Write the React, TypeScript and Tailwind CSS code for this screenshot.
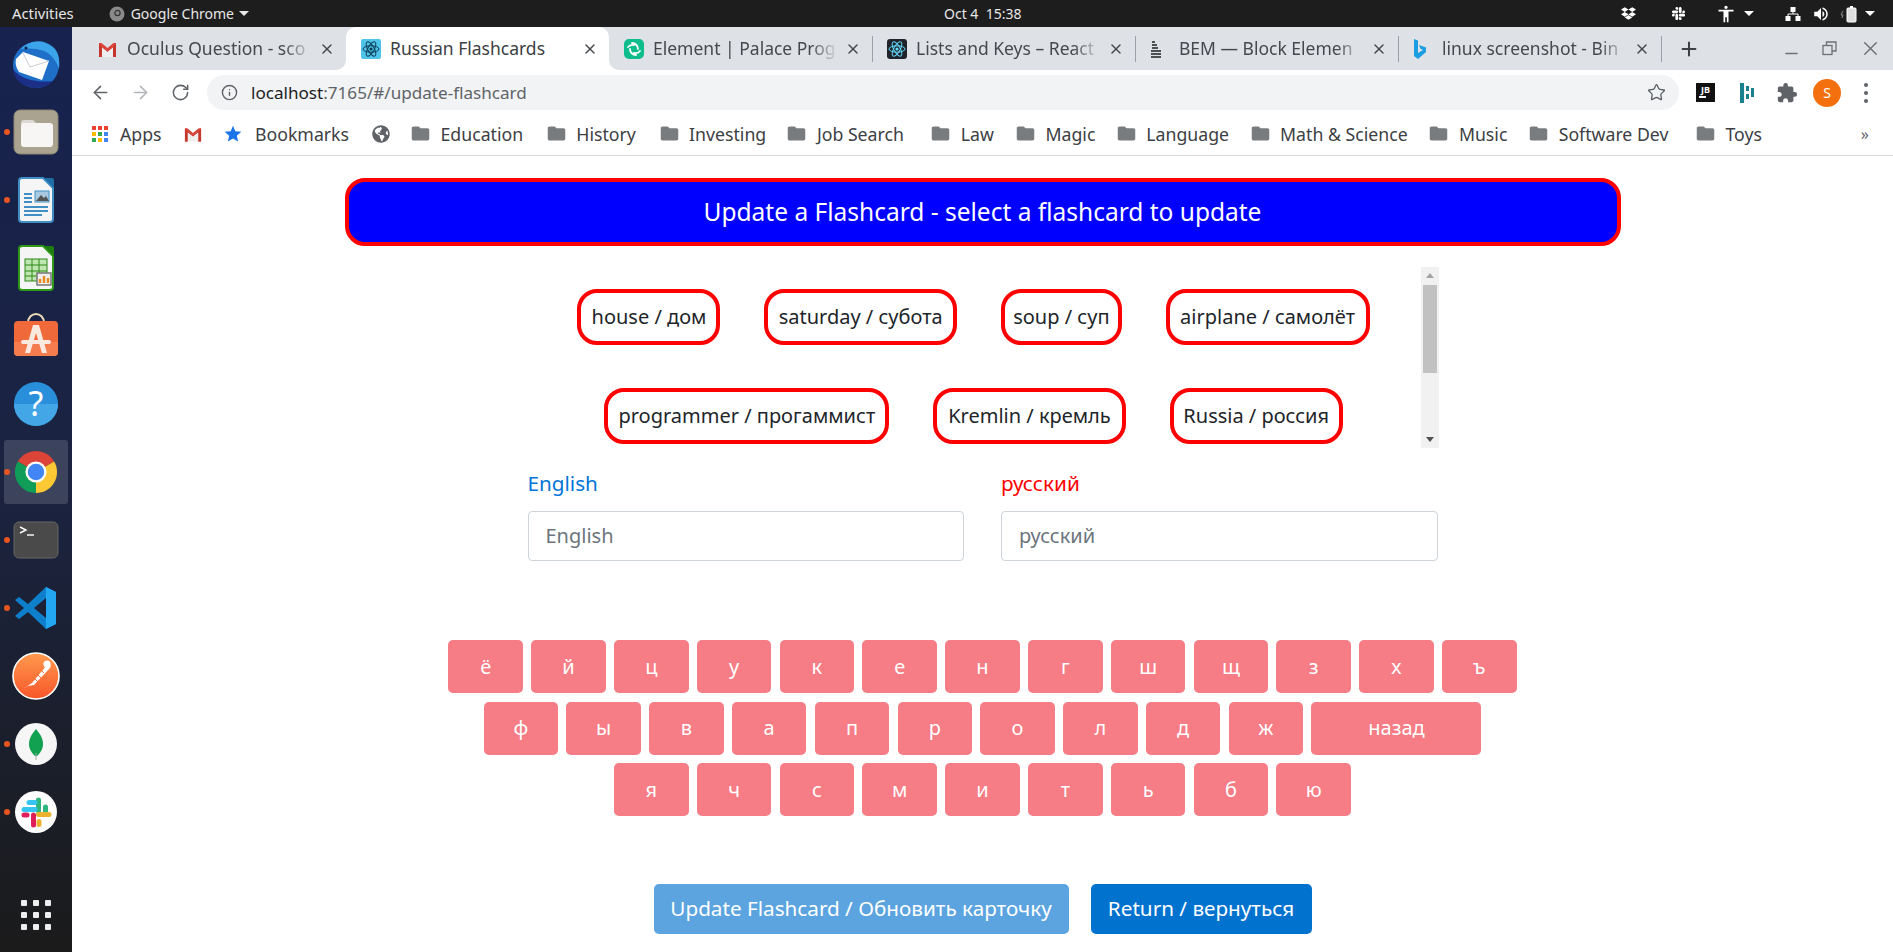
import { ArrowLeft, ArrowRight, Info, Minus, Plus, RotateCw, Star, X } from 'lucide-react'
import { FaDropbox, FaGlobeAmericas, FaSlack } from 'react-icons/fa'
import { MdAccessibility, MdExtension, MdFolder, MdStar, MdVolumeUp } from 'react-icons/md'

const font = "font-['Noto_Sans','Liberation_Sans',sans-serif]"

const row1 = ['ё', 'й', 'ц', 'у', 'к', 'е', 'н', 'г', 'ш', 'щ', 'з', 'х', 'ъ']
const row2 = ['ф', 'ы', 'в', 'а', 'п', 'р', 'о', 'л', 'д', 'ж']
const row3 = ['я', 'ч', 'с', 'м', 'и', 'т', 'ь', 'б', 'ю']

const chipsTop = [
  { label: 'house / дом', w: 'w-[143px]' },
  { label: 'saturday / субота', w: 'w-[193px]' },
  { label: 'soup / суп', w: 'w-[121px]' },
  { label: 'airplane / самолёт', w: 'w-[204px]' },
]
const chipsBottom = [
  { label: 'programmer / прогаммист', w: 'w-[285px]' },
  { label: 'Kremlin / кремль', w: 'w-[193px]' },
  { label: 'Russia / россия', w: 'w-[173px]' },
]

const bookmarks = [
  { label: 'Education', w: 'w-[84px]' },
  { label: 'History', w: 'w-[61px]' },
  { label: 'Investing', w: 'w-[76px]' },
  { label: 'Job Search', w: 'w-[92px]' },
  { label: 'Law', w: 'w-[33px]' },
  { label: 'Magic', w: 'w-[49px]' },
  { label: 'Language', w: 'w-[82px]' },
  { label: 'Math & Science', w: 'w-[127px]' },
  { label: 'Music', w: 'w-[48px]' },
  { label: 'Software Dev', w: 'w-[115px]' },
  { label: 'Toys', w: 'w-[37px]' },
]

function ReactLogo({ color }: { color: string }) {
  return (
    <g fill="none" stroke={color} strokeWidth="1">
      <ellipse cx="10" cy="10" rx="8" ry="3.2" />
      <ellipse cx="10" cy="10" rx="8" ry="3.2" transform="rotate(60 10 10)" />
      <ellipse cx="10" cy="10" rx="8" ry="3.2" transform="rotate(120 10 10)" />
      <circle cx="10" cy="10" r="1.6" fill={color} stroke="none" />
    </g>
  )
}

function GmailIcon() {
  return (
    <svg width="19" height="16" viewBox="0 0 19 16">
      <path d="M1 2h2.5L9.5 7 15.5 2H18v14h-3V6.5L9.5 11 4 6.5V16H1z" fill="#d9453a" />
      <path d="M4 6.5V16H1V2z" fill="#c5372c" />
      <path d="M15 6.5V16h3V2z" fill="#c5372c" />
      <path d="M4 6.8l5.5 4.4L15 6.8V16H4z" fill="#eeeeee" />
    </svg>
  )
}

function Favicon({ kind }: { kind: string }) {
  if (kind === 'gmail') return <GmailIcon />
  if (kind === 'react') {
    return (
      <svg width="20" height="20" viewBox="0 0 20 20">
        <rect width="20" height="20" rx="2" fill="#4fc3e8" />
        <ReactLogo color="#0b3c56" />
      </svg>
    )
  }
  if (kind === 'reactdark') {
    return (
      <svg width="20" height="20" viewBox="0 0 20 20">
        <rect width="20" height="20" rx="3" fill="#20232a" />
        <ReactLogo color="#61dafb" />
      </svg>
    )
  }
  if (kind === 'element') {
    return (
      <svg width="20" height="20" viewBox="0 0 20 20">
        <rect width="20" height="20" rx="5" fill="#0dbd8b" />
        <path d="M8 4a6 6 0 0 1 6 6M12 16a6 6 0 0 1-6-6M4 8a6 6 0 0 1 6-2M16 12a6 6 0 0 1-6 2" fill="none" stroke="#fff" strokeWidth="1.8" strokeLinecap="round" />
      </svg>
    )
  }
  if (kind === 'bem') {
    return (
      <svg width="12" height="18" viewBox="0 0 12 18">
        <path d="M2 2h3M2 5h5M2 8h6M1 11h10M1 14h10M1 17h10" stroke="#222" strokeWidth="1.5" />
      </svg>
    )
  }
  return (
    <svg width="14" height="22" viewBox="0 0 14 22">
      <path d="M1 1l4 1.5v12.5l5-3-2.5-1.2-1.5-3.8L13 9.5v4.5L5 21 1 18z" fill="#1b9de2" />
    </svg>
  )
}

const tabs = [
  { title: 'Oculus Question - sco', icon: 'gmail', active: false, sep: false },
  { title: 'Russian Flashcards', icon: 'react', active: true, sep: false },
  { title: 'Element | Palace Prog', icon: 'element', active: false, sep: true },
  { title: 'Lists and Keys – React', icon: 'reactdark', active: false, sep: true },
  { title: 'BEM — Block Elemen', icon: 'bem', active: false, sep: true },
  { title: 'linux screenshot - Bin', icon: 'bing', active: false, sep: true },
]

function Tab({ title, icon, active, sep }: { title: string; icon: string; active: boolean; sep: boolean }) {
  return (
    <div className={`relative flex h-full w-[263px] shrink-0 items-center pl-[15px] pr-[11px] ${active ? 'rounded-t-[10px] bg-white text-[#3c4043]' : 'text-[#45494d]'}`}>
      {active && (
        <>
          <svg className="absolute bottom-0 left-[-10px]" width="10" height="10" viewBox="0 0 10 10">
            <path d="M0 10a10 10 0 0 0 10-10v10z" fill="#fff" />
          </svg>
          <svg className="absolute bottom-0 right-[-10px]" width="10" height="10" viewBox="0 0 10 10">
            <path d="M10 10A10 10 0 0 1 0 0v10z" fill="#fff" />
          </svg>
        </>
      )}
      <div className="flex w-[29px] shrink-0 items-center">
        <Favicon kind={icon} />
      </div>
      <div className={`min-w-0 flex-1 whitespace-nowrap text-[17.5px] ${active ? '' : '[mask-image:linear-gradient(to_right,black_85%,transparent)]'}`}>
        {title}
      </div>
      <X size={16} strokeWidth={2.2} className="ml-[7px] shrink-0 text-[#45494d]" />
      {sep && <div className="absolute right-[-1px] top-[9px] h-[26px] w-px bg-[#9aa0a6]" />}
    </div>
  )
}

function Thunderbird() {
  return (
    <svg width="50" height="50" viewBox="0 0 50 50">
      <circle cx="25" cy="26" r="23" fill="#1f6fc8" />
      <path d="M10 10C18 1 32-1 42 8c6 5 7 13 6 22-3-9-8-15-15-18-8-3-16-3-23-2z" fill="#3ba4ea" />
      <path d="M2 30c1 11 11 19 23 19 8 0 13-3 17-7-14 2-32-1-40-12z" fill="#1b2f86" />
      <path d="M5 20L12 13 38 22 31 41 8 33C5 29 4 24 5 20z" fill="#fff" />
      <path d="M12 14l7 14 19-6" fill="none" stroke="#c9ccd2" strokeWidth="1" />
      <circle cx="15" cy="9" r="1.5" fill="#10224f" />
    </svg>
  )
}

function FilesIcon() {
  return (
    <svg width="46" height="46" viewBox="0 0 46 46">
      <rect x="1" y="1" width="44" height="44" rx="6" fill="#aaa38f" stroke="#8b8573" />
      <path d="M8 14a3 3 0 0 1 3-3h9l4 4H8z" fill="#dcd9d2" />
      <rect x="8" y="14" width="32" height="24" rx="3" fill="#f7f6f4" />
    </svg>
  )
}

function DocIcon({ border, fold, kind }: { border: string; fold: string; kind: 'writer' | 'calc' }) {
  return (
    <svg width="38" height="46" viewBox="0 0 38 46">
      <path d="M2 4a3 3 0 0 1 3-3h21l10 10v31a3 3 0 0 1-3 3H5a3 3 0 0 1-3-3z" fill="#f5f5f5" stroke={border} strokeWidth="2" />
      <path d="M27 1h8a2 2 0 0 1 2 2v8z" fill={fold} />
      {kind === 'writer' ? (
        <>
          <path d="M7 17h8M7 21h8M7 25h8M7 30h24M7 34h24M7 38h18" stroke={border} strokeWidth="2" />
          <rect x="18" y="14" width="14" height="11" fill="#a9cbe2" stroke={border} />
          <path d="M19 24l5-6 3 3 2-2 3 5z" fill="#555" />
        </>
      ) : (
        <>
          <rect x="8" y="14" width="22" height="22" fill="#bfe5b0" stroke="#2c8a17" />
          <path d="M8 20h22M8 26h22M8 31h22M15 14v22M22 14v22" stroke="#2c8a17" />
          <rect x="20" y="28" width="14" height="12" fill="#eee" stroke="#777" strokeWidth="1.5" />
          <path d="M23 38v-4M27 38v-7M31 38v-5" strokeWidth="2.4" stroke="#e98a1a" />
        </>
      )}
    </svg>
  )
}

function SoftwareIcon() {
  return (
    <svg width="46" height="44" viewBox="0 1 46 44" className="mt-[-2px]">
      <path d="M15 11c0-12 16-12 16 0" fill="none" stroke="#ecd9b8" strokeWidth="2" />
      <rect x="1" y="9" width="44" height="35" rx="4" fill="#f0693a" />
      <path d="M1 30h44v10a4 4 0 0 1-4 4H5a4 4 0 0 1-4-4z" fill="#f47c4e" />
      <path d="M20 13h6l8 28h-5l-6-20-6 20h-5z" fill="#fbe9df" />
      <rect x="8" y="28" width="30" height="4" rx="2" fill="#fbe9df" />
    </svg>
  )
}

function HelpIcon() {
  return (
    <svg width="46" height="46" viewBox="0 0 46 46">
      <circle cx="23" cy="23" r="22" fill="#2a8fdb" />
      <path d="M1 23h44a22 22 0 0 1-44 0z" fill="#43a6e6" />
      <text x="23" y="35" textAnchor="middle" fontSize="34" fill="#fff" fontFamily="Noto Sans, sans-serif">?</text>
    </svg>
  )
}

function ChromeIcon() {
  return (
    <svg width="46" height="46" viewBox="0 0 48 48">
      <path d="M24 24L5 13A22 22 0 0 1 43 13z" fill="#db4437" />
      <path d="M24 24L43 13A22 22 0 0 1 24 46z" fill="#fcc934" />
      <path d="M24 24L24 46A22 22 0 0 1 5 13z" fill="#0f9d58" />
      <circle cx="24" cy="24" r="11" fill="#fff" />
      <circle cx="24" cy="24" r="8.6" fill="#4285f4" />
    </svg>
  )
}

function TerminalIcon() {
  return (
    <svg width="46" height="38" viewBox="0 0 46 38">
      <rect x="1" y="1" width="44" height="36" rx="5" fill="#4a4a4a" stroke="#666" />
      <path d="M7 6l6 3-6 3" fill="none" stroke="#fff" strokeWidth="1.4" />
      <path d="M14 14h7" stroke="#fff" strokeWidth="1.4" />
    </svg>
  )
}

function VsCodeIcon() {
  return (
    <svg width="44" height="44" viewBox="0 0 44 44">
      <path d="M32 1l10 5v32l-10 5-18-17-9 7-4-3 9-8-9-8 4-3 9 7zM32 12L20 22l12 10z" fill="#0e7fcb" />
      <path d="M32 1l10 5v32l-10 5z" fill="#22a7f0" />
    </svg>
  )
}

function PostmanIcon() {
  return (
    <svg width="48" height="48" viewBox="0 0 48 48">
      <defs>
        <linearGradient id="pm" x1="0" y1="0" x2="0" y2="1">
          <stop offset="0" stopColor="#ff9a4d" />
          <stop offset="1" stopColor="#f8562a" />
        </linearGradient>
      </defs>
      <circle cx="24" cy="24" r="23" fill="url(#pm)" stroke="#fff" strokeWidth="1.6" />
      <path d="M11 37l9-6 15-18c2-2 5 1 3 3L22 33l-6 1z" fill="#fff" />
      <circle cx="35" cy="12" r="3.6" fill="#fff" />
      <path d="M21 25l5 5M24 21l5 5M28 17l4 4" stroke="#f8702f" strokeWidth="1" />
    </svg>
  )
}

function MongoIcon() {
  return (
    <svg width="42" height="42" viewBox="0 0 42 42">
      <circle cx="21" cy="21" r="21" fill="#f6f6f6" />
      <path d="M21 6c5 6 7 10 7 15 0 6-4 10-6 12h-2c-2-2-6-6-6-12 0-5 2-9 7-15z" fill="#12a150" />
      <path d="M21 30v7" stroke="#aaa" strokeWidth="1" />
    </svg>
  )
}

function SlackIcon() {
  return (
    <svg width="42" height="42" viewBox="0 0 42 42">
      <circle cx="21" cy="21" r="21" fill="#fff" />
      <path d="M23.5 9v11M30.5 16v4" stroke="#2eb67d" strokeWidth="5" strokeLinecap="round" />
      <path d="M9 18.5h11M14 11.5h6" stroke="#36c5f0" strokeWidth="5" strokeLinecap="round" />
      <path d="M18.5 24v10M9 24h3" stroke="#e01e5a" strokeWidth="5" strokeLinecap="round" />
      <path d="M23.5 23.5H34M24 30.5v3" stroke="#ecb22e" strokeWidth="5" strokeLinecap="round" />
    </svg>
  )
}

const dockItems = [
  { icon: <Thunderbird />, dot: false, on: false },
  { icon: <FilesIcon />, dot: true, on: false },
  { icon: <DocIcon border="#3f8fc4" fold="#1d6fa5" kind="writer" />, dot: true, on: false },
  { icon: <DocIcon border="#2c9a17" fold="#1f7d10" kind="calc" />, dot: false, on: false },
  { icon: <SoftwareIcon />, dot: false, on: false },
  { icon: <HelpIcon />, dot: false, on: false },
  { icon: <ChromeIcon />, dot: true, on: true },
  { icon: <TerminalIcon />, dot: true, on: false },
  { icon: <VsCodeIcon />, dot: true, on: false },
  { icon: <PostmanIcon />, dot: false, on: false },
  { icon: <MongoIcon />, dot: true, on: false },
  { icon: <SlackIcon />, dot: true, on: false },
]

function Dock() {
  return (
    <aside className="flex w-[72px] shrink-0 flex-col items-center bg-gradient-to-b from-[#17224f] via-[#1b2340] to-[#1b1b1b] pt-[3px]">
      {dockItems.map((item, i) => (
        <div key={i} className="relative flex h-[68px] w-full items-center justify-center">
          {item.on && <div className="absolute inset-x-[4px] inset-y-[2px] rounded-[3px] bg-white/15" />}
          {item.dot && <div className="absolute left-[4px] top-[31px] h-[6px] w-[6px] rounded-full bg-[#e95420]" />}
          <div className="relative flex items-center justify-center">{item.icon}</div>
        </div>
      ))}
      <div className="mb-[22px] mt-auto grid grid-cols-3 gap-[6px]">
        {Array.from({ length: 9 }, (_, i) => (
          <div key={i} className="h-[6px] w-[6px] rounded-[1px] bg-[#eeeeee]" />
        ))}
      </div>
    </aside>
  )
}

function TopBar() {
  return (
    <header className="relative flex h-[27px] shrink-0 items-center bg-[#1d1d1d] text-[14px] text-[#e8e8e8]">
      <span className="ml-[12px] text-[14.8px]">Activities</span>
      <svg className="ml-[35px]" width="16" height="16" viewBox="0 0 16 16">
        <circle cx="8" cy="8" r="7.5" fill="#8a8a8a" />
        <circle cx="8.5" cy="7" r="2.6" fill="none" stroke="#333" strokeWidth="1.2" />
      </svg>
      <span className="ml-[6px]">Google Chrome</span>
      <span className="ml-[5px] h-0 w-0 border-x-[5px] border-t-[5px] border-x-transparent border-t-[#e8e8e8]" />
      <span className="absolute left-[944px]">Oct 4&nbsp;&nbsp;15:38</span>
      <div className="ml-auto flex items-center text-white">
        <FaDropbox size={15} />
        <FaSlack size={15} className="ml-[35px]" />
        <MdAccessibility size={20} className="ml-[30px]" />
        <span className="ml-[8px] h-0 w-0 border-x-[5px] border-t-[5px] border-x-transparent border-t-white" />
        <svg className="ml-[31px]" width="16" height="16" viewBox="0 0 16 16" fill="#fff">
          <rect x="5.5" y="1" width="5" height="5" />
          <rect x="0.5" y="10" width="5" height="5" />
          <rect x="10.5" y="10" width="5" height="5" />
          <path d="M8 6v2M3 10V8h10v2" fill="none" stroke="#fff" />
        </svg>
        <MdVolumeUp size={18} className="ml-[11px]" />
        <svg className="ml-[10px]" width="18" height="18" viewBox="0 0 18 18">
          <rect x="7" y="3" width="9" height="14" rx="1" fill="#ddd" stroke="#fff" />
          <rect x="10" y="1" width="3" height="2" fill="#fff" />
          <path d="M3 6L1 10h2l-1 3" fill="none" stroke="#888" />
        </svg>
        <span className="ml-[7px] mr-[18px] h-0 w-0 border-x-[5px] border-t-[5px] border-x-transparent border-t-white" />
      </div>
    </header>
  )
}

function TabStrip() {
  return (
    <div className="flex h-[43px] shrink-0 items-center bg-[#dee1e6] pl-[11px]">
      {tabs.map((t) => (
        <Tab key={t.title} {...t} />
      ))}
      <Plus size={22} strokeWidth={2.2} className="ml-[17px] text-[#3c4043]" />
      <div className="ml-auto flex items-center text-[#6d7175]">
        <Minus size={19} className="mt-[9px]" />
        <svg className="ml-[21px]" width="15" height="15" viewBox="0 0 15 15" fill="none" stroke="currentColor" strokeWidth="1.3">
          <rect x="1" y="4.5" width="9" height="9" />
          <path d="M4.5 4.5V1h9.5v9h-4" />
        </svg>
        <X size={23} strokeWidth={1.4} className="ml-[22px] mr-[11px]" />
      </div>
    </div>
  )
}

function Toolbar() {
  return (
    <div className="flex h-[45px] shrink-0 items-center bg-white">
      <ArrowLeft size={21} strokeWidth={1.8} className="ml-[18px] text-[#5f6368]" />
      <ArrowRight size={21} strokeWidth={1.8} className="ml-[19px] text-[#b4b7ba]" />
      <RotateCw size={19} strokeWidth={1.9} className="ml-[20px] text-[#5f6368]" />
      <div className="ml-[17px] flex h-[35px] w-[1472px] items-center rounded-full bg-[#f1f3f4]">
        <Info size={17} strokeWidth={2} className="ml-[14px] text-[#5f6368]" />
        <span className="ml-[13px] text-[17.1px] text-[#202124]">
          localhost<span className="text-[#5f6368]">:7165/#/update-flashcard</span>
        </span>
        <Star size={19} strokeWidth={1.7} className="ml-auto mr-[13px] text-[#5f6368]" />
      </div>
      <div className="ml-[17px] flex h-[19px] w-[19px] flex-col items-center justify-start bg-[#111] pt-[2px] text-[9px] font-bold leading-[9px] text-white">
        JB
        <span className="ml-[-6px] mt-[2px] h-[1.5px] w-[7px] bg-white" />
      </div>
      <svg className="ml-[25px]" width="14" height="20" viewBox="0 0 14 20" fill="#1a7f8e">
        <rect x="0" y="0" width="4" height="20" />
        <rect x="6" y="3" width="3" height="5" />
        <rect x="6" y="11" width="3" height="5" />
        <rect x="11" y="5" width="3" height="9" />
      </svg>
      <MdExtension size={22} className="ml-[22px] text-[#5f6368]" />
      <div className="ml-[15px] flex h-[28px] w-[28px] items-center justify-center rounded-full bg-[#f4700f] text-[14px] text-white">S</div>
      <div className="ml-[23px] flex flex-col gap-[4px]">
        <span className="h-[4px] w-[4px] rounded-full bg-[#5f6368]" />
        <span className="h-[4px] w-[4px] rounded-full bg-[#5f6368]" />
        <span className="h-[4px] w-[4px] rounded-full bg-[#5f6368]" />
      </div>
    </div>
  )
}

function BookmarksBar() {
  return (
    <div className="flex h-[41px] shrink-0 items-center whitespace-nowrap border-b border-[#dadce0] bg-white pb-[2px] text-[17.7px] text-[#3c4043]">
      <div className="ml-[20px] grid grid-cols-3 gap-[2px]">
        <span className="h-[4px] w-[4px] bg-[#ea4335]" />
        <span className="h-[4px] w-[4px] bg-[#ea4335]" />
        <span className="h-[4px] w-[4px] bg-[#ea4335]" />
        <span className="h-[4px] w-[4px] bg-[#fbbc04]" />
        <span className="h-[4px] w-[4px] bg-[#34a853]" />
        <span className="h-[4px] w-[4px] bg-[#4285f4]" />
        <span className="h-[4px] w-[4px] bg-[#34a853]" />
        <span className="h-[4px] w-[4px] bg-[#fbbc04]" />
        <span className="h-[4px] w-[4px] bg-[#4285f4]" />
      </div>
      <span className="ml-[12px] w-[42px]">Apps</span>
      <div className="ml-[22px] flex w-[18px]"><GmailIcon /></div>
      <MdStar size={20} className="ml-[21px] text-[#1a73e8]" />
      <span className="ml-[12px] w-[94px]">Bookmarks</span>
      <FaGlobeAmericas size={18} className="ml-[23px] text-[#5f6368]" />
      {bookmarks.map((b, i) => (
        <div key={b.label} className={`flex items-center ${i === 0 ? 'ml-[20px]' : 'ml-[21.3px]'}`}>
          <MdFolder size={21} className="text-[#797c7f]" />
          <span className={`ml-[9.5px] ${b.w}`}>{b.label}</span>
        </div>
      ))}
      <span className="ml-auto mr-[24px] text-[16px] text-[#5f6368]">»</span>
    </div>
  )
}

function Key({ label, wide }: { label: string; wide?: boolean }) {
  return (
    <button className={`h-[53px] shrink-0 rounded-[5px] bg-[#f67c85] text-[20px] text-white ${wide ? 'w-[170px]' : 'w-[74.5px]'}`}>
      {label}
    </button>
  )
}

function Chip({ label, w }: { label: string; w: string }) {
  return (
    <div className={`flex h-[56px] items-center justify-center whitespace-nowrap rounded-[20px] border-[4px] border-[#ff0000] bg-white text-[20px] text-[#212529] ${w}`}>
      {label}
    </div>
  )
}

function FlashcardPage() {
  return (
    <main className="flex min-h-0 flex-1 flex-col items-center bg-white pt-[22px]">
      <div className="flex h-[68px] w-[1276px] items-center justify-center rounded-[20px] border-[4px] border-[#ff0000] bg-[#0000ff] text-[24.5px] text-white">
        Update a Flashcard - select a flashcard to update
      </div>

      <div className="mt-[21px] flex h-[181px] w-[912px]">
        <div className="flex flex-1 flex-col gap-[43px] pt-[22px]">
          <div className="flex justify-center gap-[43.7px]">
            {chipsTop.map((c) => <Chip key={c.label} {...c} />)}
          </div>
          <div className="flex justify-center gap-[43.7px]">
            {chipsBottom.map((c) => <Chip key={c.label} {...c} />)}
          </div>
        </div>
        <div className="flex w-[18px] flex-col items-center bg-[#f1f1f1]">
          <span className="mt-[6px] h-0 w-0 border-x-[4px] border-b-[5px] border-x-transparent border-b-[#a3a3a3]" />
          <span className="mt-[7px] h-[88px] w-[14px] bg-[#c1c1c1]" />
          <span className="mb-[6px] mt-auto h-0 w-0 border-x-[4px] border-t-[5px] border-x-transparent border-t-[#505050]" />
        </div>
      </div>

      <div className="mt-[20px] grid w-[910px] grid-cols-2 gap-x-[37px]">
        <div>
          <label className="block h-[30px] text-[20.7px] leading-[30px] text-[#0275d8]">English</label>
          <input placeholder="English" className="mt-[13px] h-[50px] w-full rounded-[4px] border border-[#ced4da] px-[17px] pb-[2px] text-[20px] placeholder:text-[#6c757d]" />
        </div>
        <div>
          <label className="block h-[30px] text-[20.7px] leading-[30px] text-[#ff0000]">русский</label>
          <input placeholder="русский" className="mt-[13px] h-[50px] w-full rounded-[4px] border border-[#ced4da] px-[17px] pb-[2px] text-[20px] placeholder:text-[#6c757d]" />
        </div>
      </div>

      <div className="mt-[79px] flex flex-col items-center gap-[8.5px]">
        <div className="flex gap-[8.3px]">{row1.map((k) => <Key key={k} label={k} />)}</div>
        <div className="flex gap-[8.3px]">
          {row2.map((k) => <Key key={k} label={k} />)}
          <Key label="назад" wide />
        </div>
        <div className="flex gap-[8.3px]">{row3.map((k) => <Key key={k} label={k} />)}</div>
      </div>

      <div className="mt-[68px] flex gap-[22px]">
        <button className="h-[50px] w-[415px] rounded-[5px] bg-[#5ba4e0] text-[20.7px] text-white">Update Flashcard / Обновить карточку</button>
        <button className="h-[50px] w-[221px] rounded-[5px] bg-[#0272cf] text-[20.7px] text-white">Return / вернуться</button>
      </div>
    </main>
  )
}

export default function App() {
  return (
    <div className={`flex h-screen flex-col overflow-hidden bg-white ${font}`}>
      <TopBar />
      <div className="flex min-h-0 flex-1">
        <Dock />
        <div className="flex min-w-0 flex-1 flex-col">
          <TabStrip />
          <Toolbar />
          <BookmarksBar />
          <FlashcardPage />
        </div>
      </div>
    </div>
  )
}
